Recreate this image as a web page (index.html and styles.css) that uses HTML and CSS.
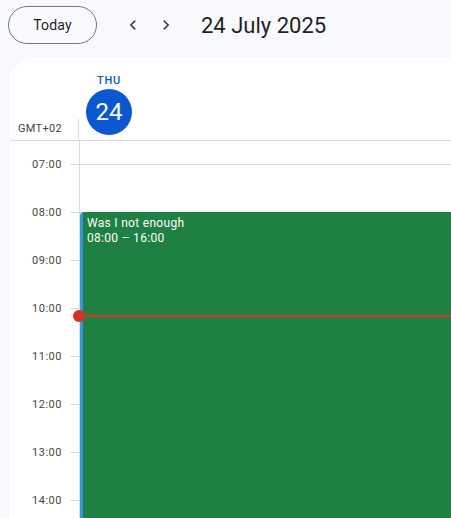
FILE: index.html
```html
<!DOCTYPE html>
<html lang="en">
<head>
  <meta charset="UTF-8" />
  <meta name="viewport" content="width=device-width, initial-scale=1.0" />
  <title>Calendar - Day</title>
  <link rel="stylesheet" href="styles.css">
</head>
<body>
  <header class="topbar">
    <button class="today-btn">Today</button>
    <div class="nav">
      <button class="nav-btn" aria-label="Previous day">
        <svg width="24" height="24" viewBox="0 0 24 24"><path d="M15.4 7.4 14 6l-6 6 6 6 1.4-1.4-4.6-4.6z" fill="#444746"/></svg>
      </button>
      <button class="nav-btn" aria-label="Next day">
        <svg width="24" height="24" viewBox="0 0 24 24"><path d="M8.6 7.4 10 6l6 6-6 6-1.4-1.4 4.6-4.6z" fill="#444746"/></svg>
      </button>
    </div>
    <h1 class="title">24 July 2025</h1>
  </header>

  <main class="card">
    <div class="day-head">
      <div class="gutter-head"><span class="tz">GMT+02</span></div>
      <div class="day-col-head">
        <div class="day-label">
          <span class="dow">THU</span>
          <span class="date">24</span>
        </div>
      </div>
    </div>

    <div class="day-body">
      <div class="gutter" id="gutter"></div>
      <div class="day-col" id="dayCol">
        <div class="event">
          <div class="event-title">Was I not enough</div>
          <div class="event-time">08:00 – 16:00</div>
        </div>
        <div class="now-line"><span class="now-dot"></span></div>
      </div>
    </div>
  </main>

  <script>
    const gutter = document.getElementById('gutter');
    const dayCol = document.getElementById('dayCol');

    // partial row left over from scroll position
    gutter.insertAdjacentHTML('beforeend', '<div class="slot first"></div>');
    dayCol.insertAdjacentHTML('afterbegin', '<div class="cell first"></div>');

    for (let h = 7; h <= 14; h++) {
      const label = String(h).padStart(2, '0') + ':00';
      gutter.insertAdjacentHTML('beforeend', `<div class="slot"><span class="hour">${label}</span></div>`);
      dayCol.insertAdjacentHTML('beforeend', '<div class="cell"></div>');
    }
  </script>
</body>
</html>
```

FILE: styles.css
```css
html, body { height: 100%; }
body {
  margin: 0;
  background: #f8fafd;
  font-family: Roboto, "Noto Sans", Arial, sans-serif;
  color: #1f1f1f;
  overflow: hidden;
}

.topbar { display: flex; align-items: center; padding: 6px 8px 0; height: 38px; }
.today-btn {
  height: 38px; width: 89px;
  border: 1px solid #747775; border-radius: 19px;
  background: transparent; color: #1f1f1f;
  font: 400 14px Roboto, Arial, sans-serif;
  letter-spacing: 0.2px;
  padding: 0; cursor: pointer;
}
.nav { display: flex; gap: 1px; margin-left: 20px; }
.nav-btn {
  width: 32px; height: 32px; padding: 0;
  border: none; background: transparent;
  display: flex; align-items: center; justify-content: center;
  cursor: pointer;
}
.nav-btn svg { width: 20px; height: 20px; }
.title { margin: 0 0 0 19px; font-size: 22px; font-weight: 400; color: #1f1f1f; letter-spacing: 0; }

.card {
  margin: 14px 0 0 10px;
  background: #fff;
  border-top-left-radius: 24px;
  height: calc(100% - 58px);
  overflow: hidden;
}

.day-head { display: grid; grid-template-columns: 69px 1fr; height: 82px; border-bottom: 1px solid #dadce0; }
.gutter-head { display: flex; align-items: flex-end; }
.tz {
  display: block; width: 100%; height: 21px;
  box-sizing: border-box; padding-left: 8px;
  border-right: 1px solid #dadce0;
  font-size: 11px; line-height: 20px; color: #444746;
  letter-spacing: 0.3px;
}
.day-col-head { padding-top: 16px; }
.day-label { width: 60px; display: flex; flex-direction: column; align-items: center; }
.dow { font-size: 11px; line-height: 14px; font-weight: 500; letter-spacing: 0.8px; color: #0b57d0; }
.date {
  margin-top: 1px;
  width: 46px; height: 46px; border-radius: 50%;
  background: #0b57d0; color: #fff;
  font-size: 24px; line-height: 46px; text-align: center;
}

.day-body { display: grid; grid-template-columns: 69px 1fr; }
.gutter .slot {
  display: flow-root;
  height: 48px;
  background: linear-gradient(#dadce0, #dadce0) right top / 9px 1px no-repeat;
  text-align: right; padding-right: 17px;
}
.gutter .slot.first { height: 23px; background: none; }
.hour { display: block; margin-top: -6px; font-size: 11px; line-height: 14px; color: #444746; letter-spacing: 0.5px; }

.day-col { position: relative; border-left: 1px solid #dadce0; }
.cell { height: 48px; box-sizing: border-box; border-top: 1px solid #dadce0; }
.cell.first { height: 23px; border-top: none; }

.event {
  position: absolute; top: 71px; left: 0; right: 0; height: 384px;
  background: #1f8043;
  border-left: 3px solid #3a94d8;
  border-top-left-radius: 4px;
  padding: 4px 4px;
  color: #fff; font-size: 12px; line-height: 15px;
  letter-spacing: 0.3px;
}

.now-line { position: absolute; top: 174px; left: 0; right: 0; height: 2px; background: #d93025; }
.now-dot {
  position: absolute; left: -7px; top: -5px;
  width: 12px; height: 12px; border-radius: 50%; background: #d93025;
}
```
